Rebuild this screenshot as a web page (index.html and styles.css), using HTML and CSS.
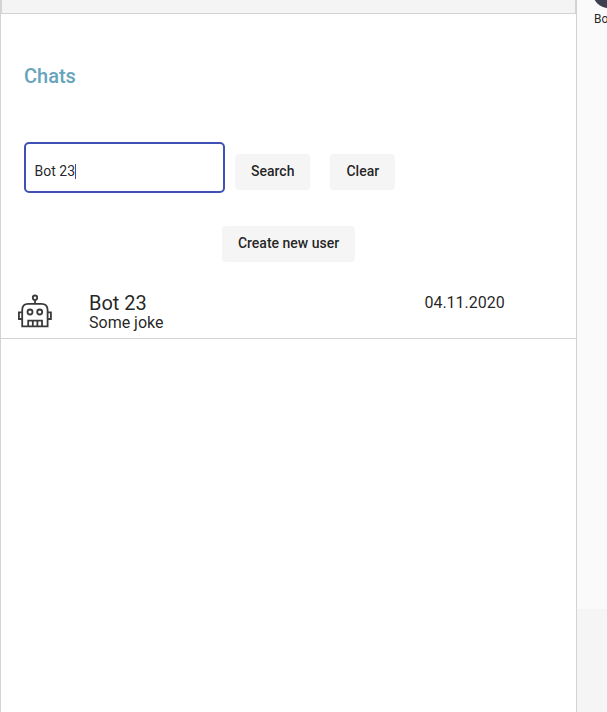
FILE: index.html
```html
<!DOCTYPE html>
<html lang="en">
<head>
<meta charset="utf-8">
<title>Chats</title>
<link rel="stylesheet" href="styles.css">
</head>
<body>
<div class="app">
  <main class="sidebar">
    <div class="topbar"></div>
    <h2 class="title">Chats</h2>
    <form class="search">
      <div class="field"><span class="value">Bot 23</span><span class="caret"></span></div>
      <button type="button" class="btn">Search</button>
      <button type="button" class="btn btn-clear">Clear</button>
    </form>
    <div class="create"><button type="button" class="btn">Create new user</button></div>
    <div class="chat">
      <svg class="robot" viewBox="0 0 36 36" fill="none" stroke="#3a3a3a" stroke-width="1.8">
        <circle cx="19" cy="3.7" r="2.2"/>
        <path d="M19 6.2V9.5M6.2 32.3V16Q6.2 9.8 12.2 9.8H25.4Q31.6 9.8 31.6 16V32.3ZM6.2 18.3H2.9V25H6.2M31.6 18.3H34.9V25H31.6M12.2 32.3V26.6H26V32.3M16.8 26.6V32.3M21.4 26.6V32.3"/>
        <circle cx="14" cy="18" r="2.5"/>
        <circle cx="23.7" cy="18" r="2.5"/>
      </svg>
      <div class="info">
        <div class="name">Bot 23</div>
        <div class="message">Some joke</div>
      </div>
      <time class="date">04.11.2020</time>
    </div>
  </main>
  <aside class="conversation">
    <div class="messages">
      <div class="avatar"></div>
      <div class="author">Bot 23</div>
    </div>
    <div class="composer"></div>
  </aside>
</div>
</body>
</html>
```
FILE: styles.css
```css
* { box-sizing: border-box; }
body { margin: 0; font-family: Roboto, sans-serif; color: rgba(0, 0, 0, .87); background: #fff; }
.app { display: flex; height: 712px; overflow: hidden; }
.sidebar { width: 577px; flex: none; border: solid #d3d3d3; border-width: 0 1px; }
.topbar { height: 14px; background: #f4f4f4; border: solid #d3d3d3; border-width: 0 1px 1px; }
.title { margin: 46px 0 0 23px; font-size: 20px; line-height: 32px; font-weight: 500; color: #67a3bd; }
.search { display: flex; margin: 50px 0 0 23px; height: 51px; }
.field { width: 201px; height: 51px; border: 2px solid #3f51b5; border-radius: 5px; padding: 19px 0 0 8.6px; display: flex; font-size: 14px; line-height: 17px; }
.value { width: 40.4px; white-space: nowrap; }
.caret { width: 1px; height: 15px; margin-top: 1px; background: #3f51b5; }
.btn { height: 36px; border: 0; border-radius: 4px; padding: 0 16px 2px; background: #f5f5f5; font: 500 14px/34px Roboto, sans-serif; color: rgba(0, 0, 0, .87); }
.search .btn { margin: 12px 0 0 10px; }
.search .btn-clear { margin-left: 20px; }
.create { display: flex; justify-content: center; margin-top: 33px; }
.chat { display: flex; height: 53px; margin-top: 24px; border-bottom: 1px solid #d3d3d3; }
.robot { width: 36px; height: 36px; margin: 8px 0 0 15px; flex: none; }
.info { width: 336px; margin: 6px 0 0 37px; }
.name { font-size: 20px; line-height: 23px; }
.message { font-size: 16px; line-height: 16px; }
.date { font-size: 16px; line-height: 20px; margin: 7px 0 0 -.6px; }
.conversation { flex: 1; background: #f5f5f5; overflow: hidden; }
.messages { height: 609px; background: #fafafa; padding-left: 17px; overflow: hidden; }
.avatar { width: 30px; height: 30px; border-radius: 50%; margin: -22px 0 0 -1px; background: #3d4152; }
.author { font-size: 12px; line-height: 14px; margin-top: 4px; white-space: nowrap; }
```
